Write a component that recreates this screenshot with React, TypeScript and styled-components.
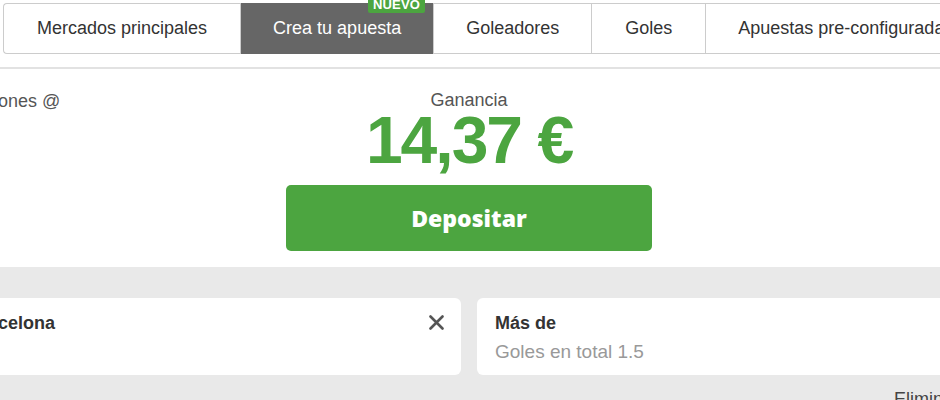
import styled, { createGlobalStyle } from 'styled-components';

const GlobalStyle = createGlobalStyle`
	body {
		margin: 0;
		background: #fff;
		font-family: 'Liberation Sans', Arial, sans-serif;
		overflow: hidden;
	}
`;

const Page = styled.div`
	width: 940px;
	height: 400px;
	overflow: hidden;
`;

const Header = styled.div`
	padding: 3px 0 13px 3px;
	border-bottom: 2px solid #e2e2e2;
`;

const TabBar = styled.nav`
	display: flex;
	height: 51px;
	box-sizing: border-box;
	border: 1px solid #cccccc;
	border-right: none;
	border-radius: 4px 0 0 4px;
	white-space: nowrap;
`;

type TabProps = {
	$isActive?: boolean;
	$pad: number;
};

const Tab = styled.button<TabProps>`
	position: relative;
	flex-shrink: 0;
	display: flex;
	align-items: center;
	padding: 0 ${(props) => props.$pad}px;
	margin: ${(props) => (props.$isActive ? '-1px 0' : '0')};
	border: none;
	border-left: 1px solid #cccccc;
	background: ${(props) => (props.$isActive ? '#666666' : 'transparent')};
	color: ${(props) => (props.$isActive ? '#ffffff' : '#333333')};
	font-family: inherit;
	font-size: 18px;
	cursor: pointer;

	&:first-child {
		border-left: none;
	}
`;

const Badge = styled.span`
	position: absolute;
	top: -8px;
	right: 8px;
	height: 18px;
	padding: 0 5px;
	border-radius: 2px;
	background: #4ca540;
	color: #fff;
	font-size: 13px;
	font-weight: 700;
	line-height: 20px;
	letter-spacing: 0.2px;
`;

const Wide = styled.div`
	width: 1240px;
	margin-left: -151px;
`;

const Summary = styled.section`
	display: grid;
	grid-template-columns: 1fr auto 1fr;
	padding: 22px 16px 16px;
`;

const Note = styled.div`
	font-size: 18px;
	line-height: 21px;
	color: #555;
`;

const Center = styled.div`
	display: flex;
	flex-direction: column;
	align-items: center;
`;

const Label = styled.div`
	font-size: 18px;
	line-height: 19px;
	color: #555;
`;

const Amount = styled.div`
	font-size: 66px;
	font-weight: 700;
	line-height: 60px;
	letter-spacing: -2px;
	color: #4ca540;
`;

const DepositButton = styled.button`
	margin-top: 15px;
	width: 366px;
	height: 66px;
	border: none;
	border-radius: 5px;
	background: #4ca540;
	color: #fff;
	font-family: 'Open Sans', sans-serif;
	font-size: 23px;
	font-weight: 800;
	cursor: pointer;
`;

const Selections = styled.section`
	background: #e9e9e9;
	padding: 31px 16px 0;
	height: 200px;
`;

const CardGrid = styled.div`
	display: grid;
	grid-template-columns: 1fr 1fr;
	gap: 16px;
`;

const Card = styled.div`
	position: relative;
	height: 77px;
	box-sizing: border-box;
	padding: 15px 18px;
	background: #fff;
	border-radius: 6px;
`;

const CardTitle = styled.div`
	font-size: 18px;
	font-weight: 700;
	line-height: 21px;
	color: #333;
`;

const CardSub = styled.div`
	margin-top: 7px;
	font-size: 19px;
	line-height: 22px;
	color: #999;
`;

const Remove = styled.button`
	position: absolute;
	top: 17px;
	right: 17px;
	padding: 0;
	border: none;
	background: none;
	display: flex;
	cursor: pointer;
`;

const FooterRow = styled.div`
	display: flex;
	justify-content: flex-end;
	padding: 14px 74px 0 0;
	font-size: 18px;
	line-height: 21px;
	color: #444;
`;

const tabs = [
	{ label: 'Mercados principales', pad: 33 },
	{ label: 'Crea tu apuesta', pad: 32, active: true, badge: 'NUEVO' },
	{ label: 'Goleadores', pad: 32 },
	{ label: 'Goles', pad: 33 },
	{ label: 'Apuestas pre-configuradas', pad: 32 }
];

const CloseIcon = () => (
	<svg width="15" height="15" viewBox="0 0 15 15">
		<path
			d="M1.5 1.5 L13.5 13.5 M13.5 1.5 L1.5 13.5"
			stroke="#555"
			strokeWidth="2.6"
			strokeLinecap="round"
		/>
	</svg>
);

const App = () => {
	return (
		<Page>
			<GlobalStyle />
			<Header>
				<TabBar>
					{tabs.map((tab) => (
						<Tab key={tab.label} $isActive={tab.active} $pad={tab.pad}>
							{tab.label}
							{tab.badge && <Badge>{tab.badge}</Badge>}
						</Tab>
					))}
				</TabBar>
			</Header>
			<Wide>
				<Summary>
					<Note>Cuota de selecciones @</Note>
					<Center>
						<Label>Ganancia</Label>
						<Amount>14,37 €</Amount>
						<DepositButton>Depositar</DepositButton>
					</Center>
					<div />
				</Summary>
				<Selections>
					<CardGrid>
						<Card>
							<CardTitle>Ganador: Barcelona</CardTitle>
							<CardSub>1X2</CardSub>
							<Remove aria-label="Eliminar">
								<CloseIcon />
							</Remove>
						</Card>
						<Card>
							<CardTitle>Más de</CardTitle>
							<CardSub>Goles en total 1.5</CardSub>
						</Card>
					</CardGrid>
					<FooterRow>Eliminar todo</FooterRow>
				</Selections>
			</Wide>
		</Page>
	);
};

export default App;
